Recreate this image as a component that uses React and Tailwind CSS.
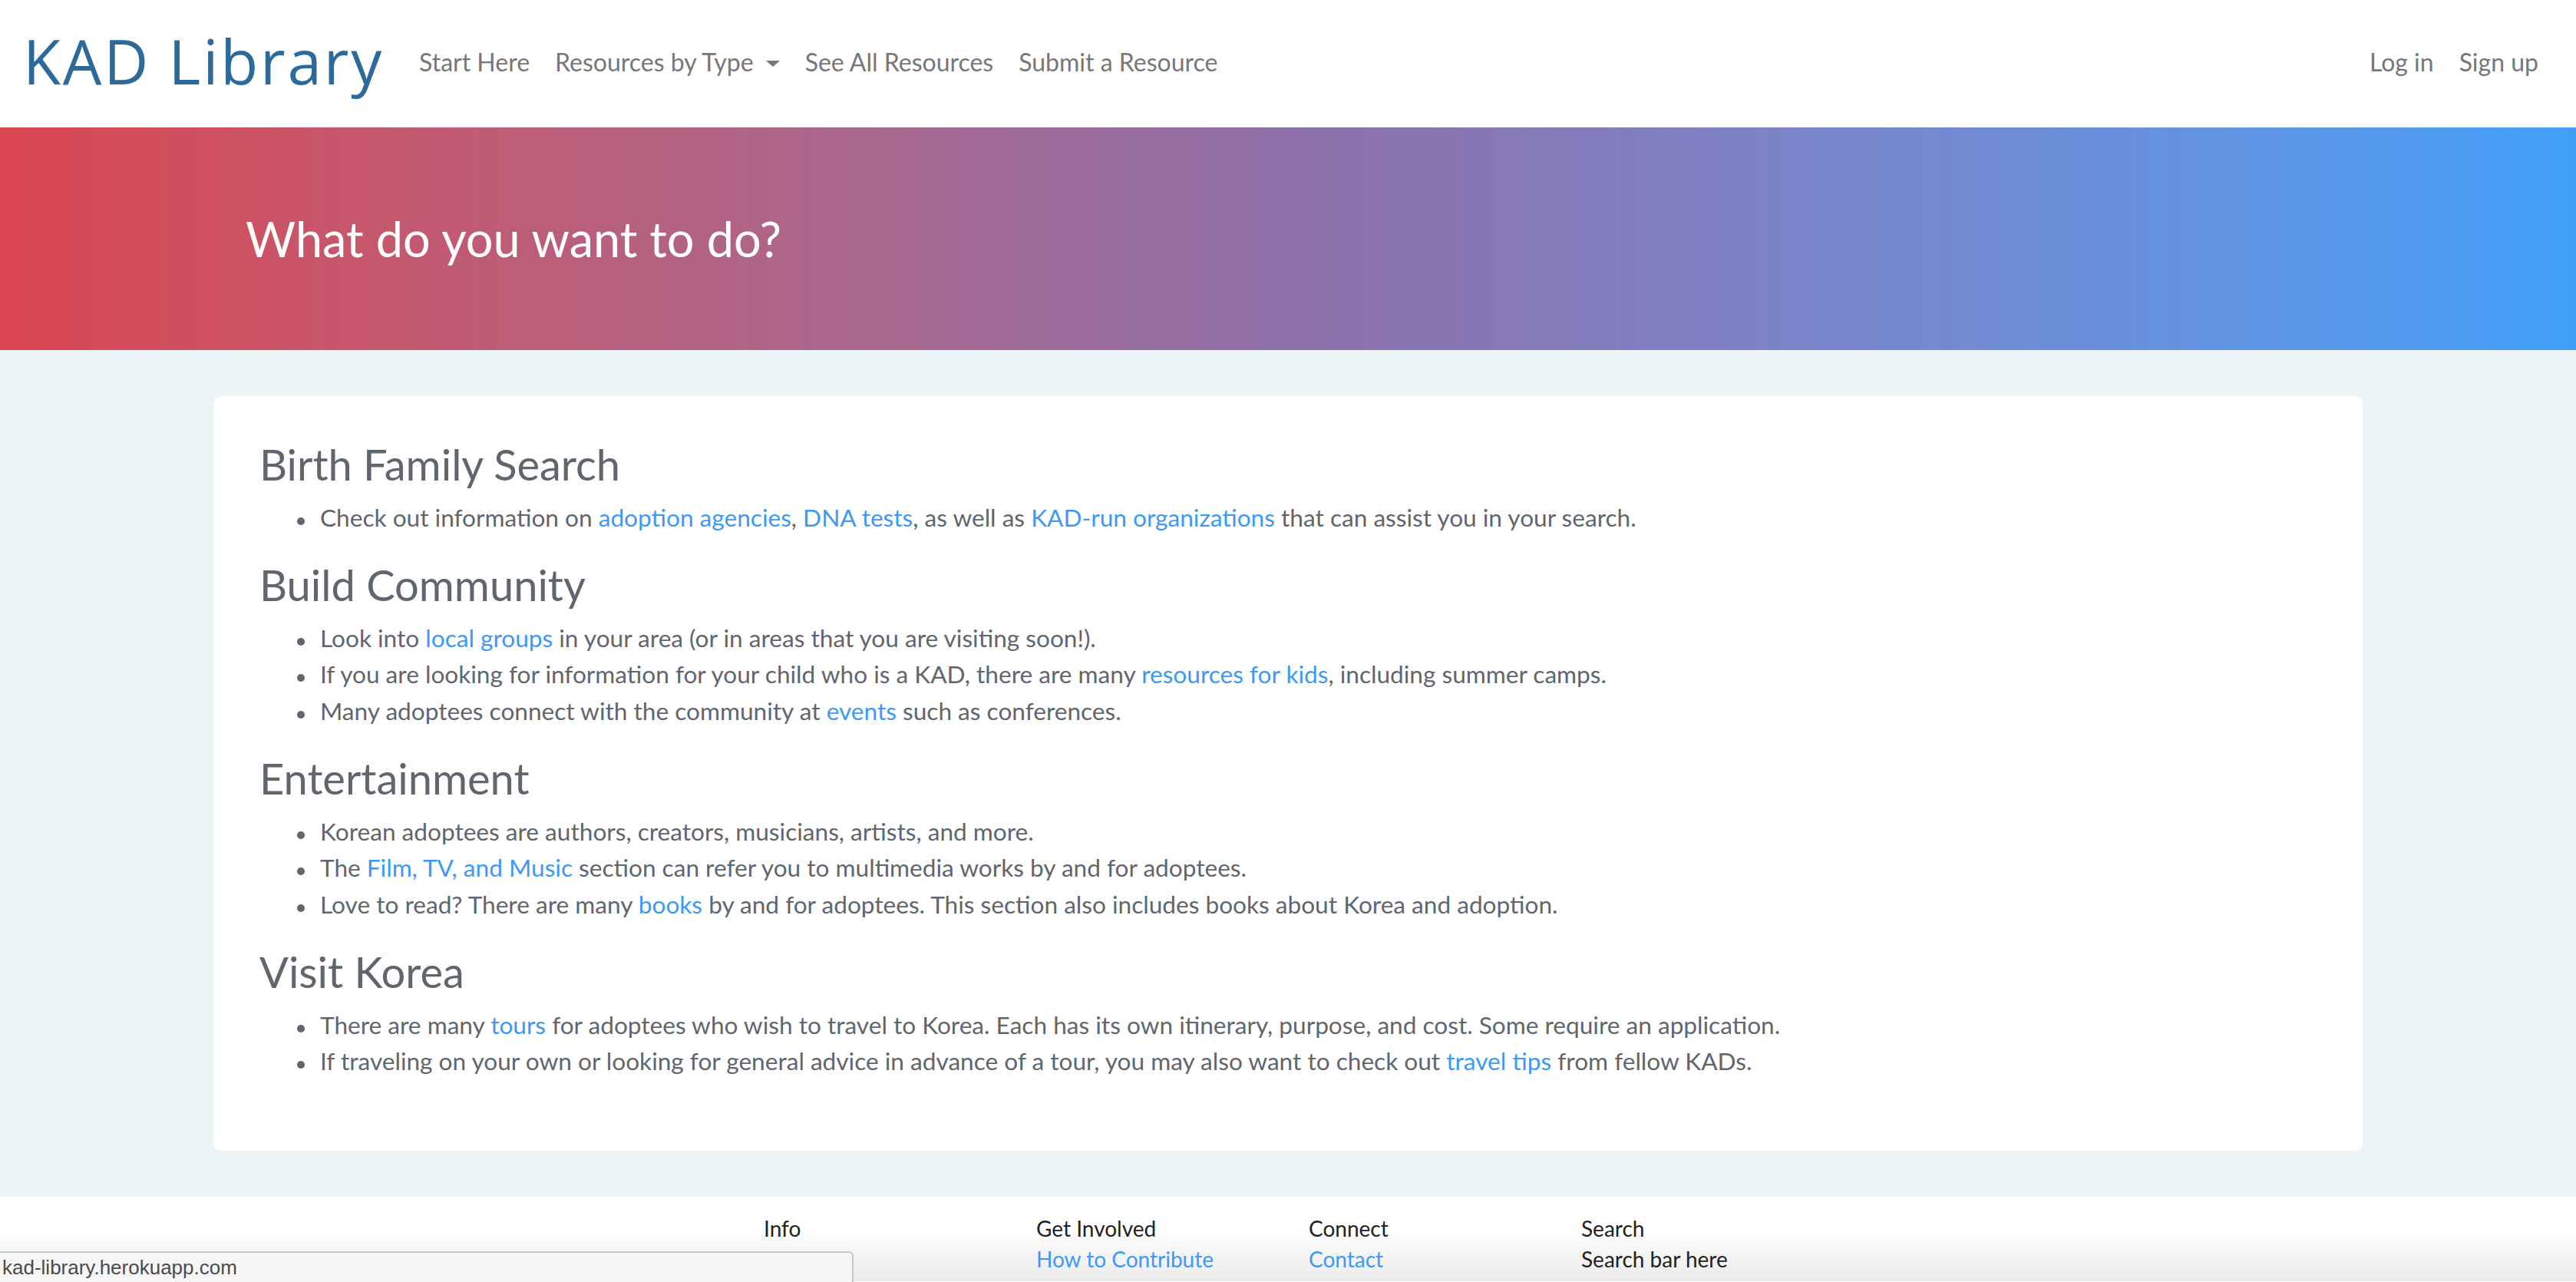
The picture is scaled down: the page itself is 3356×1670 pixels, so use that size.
const navLinks = ["Start Here", "Resources by Type", "See All Resources", "Submit a Resource"];

const Link = ({ children }) => (
	<a href="#" className="text-[#3d99f5]">{children}</a>
);

const sections = [
	{
		title: "Birth Family Search",
		items: [
			<>Check out information on <Link>adoption agencies</Link>, <Link>DNA tests</Link>, as well as <Link>KAD-run organizations</Link> that can assist you in your search.</>
		]
	},
	{
		title: "Build Community",
		items: [
			<>Look into <Link>local groups</Link> in your area (or in areas that you are visiting soon!).</>,
			<>If you are looking for information for your child who is a KAD, there are many <Link>resources for kids</Link>, including summer camps.</>,
			<>Many adoptees connect with the community at <Link>events</Link> such as conferences.</>
		]
	},
	{
		title: "Entertainment",
		items: [
			<>Korean adoptees are authors, creators, musicians, artists, and more.</>,
			<>The <Link>Film, TV, and Music</Link> section can refer you to multimedia works by and for adoptees.</>,
			<>Love to read? There are many <Link>books</Link> by and for adoptees. This section also includes books about Korea and adoption.</>
		]
	},
	{
		title: "Visit Korea",
		items: [
			<>There are many <Link>tours</Link> for adoptees who wish to travel to Korea. Each has its own itinerary, purpose, and cost. Some require an application.</>,
			<>If traveling on your own or looking for general advice in advance of a tour, you may also want to check out <Link>travel tips</Link> from fellow KADs.</>
		]
	}
];

const footerCols = [
	{ title: "Info", item: null },
	{ title: "Get Involved", item: <Link>How to Contribute</Link> },
	{ title: "Connect", item: <Link>Contact</Link> },
	{ title: "Search", item: "Search bar here" }
];

const App = () => {
	return (
		<div className="relative min-h-[1670px] bg-white font-['Lato',sans-serif]">
			{/* navbar */}
			<nav className="flex h-[166px] items-center justify-between pl-[30px] pr-[49px]">
				<div className="flex items-center">
					<a href="#" className="mb-[8px] font-['Open_Sans',sans-serif] text-[80px] leading-none tracking-[2.8px] text-[#2c6a9c]">
						KAD Library
					</a>
					<ul className="mb-[4px] ml-[46px] flex gap-[33px] text-[32px] leading-none text-[#777]">
						{navLinks.map((label) => (
							<li key={label} className="flex items-center">
								<a href="#">{label}</a>
								{label === "Resources by Type" && (
									<span className="ml-[16px] mt-[4px] h-0 w-0 border-x-[9px] border-t-[8px] border-x-transparent border-t-[#777]" />
								)}
							</li>
						))}
					</ul>
				</div>
				<ul className="mb-[4px] flex gap-[33px] text-[32px] leading-none text-[#777]">
					<li><a href="#">Log in</a></li>
					<li><a href="#">Sign up</a></li>
				</ul>
			</nav>

			{/* hero */}
			<header className="flex h-[290px] items-center bg-gradient-to-r from-[#da4550] via-[#8e70a9] to-[#3fa0f9] pl-[320px]">
				<h1 className="text-[63px] leading-[1.1] text-white">What do you want to do?</h1>
			</header>

			{/* main */}
			<main className="bg-[#edf4f7] py-[60px]">
				<div className="mx-auto w-[2800px] rounded-[10px] bg-white px-[60px] pb-[92px] pt-[58px] text-[#5f666d]">
					{sections.map((section, index) => (
						<section key={section.title} className={index ? "mt-[33px]" : ""}>
							<h2 className="text-[56px] leading-[1.1]">{section.title}</h2>
							<ul className="mt-[15px] pl-[43px] text-[31.6px] leading-[47.5px]">
								{section.items.map((item, i) => (
									<li key={i} className="flex items-start">
										<span className="w-[36px] shrink-0 pt-[23px]">
											<span className="ml-[6px] block h-[10px] w-[10px] rounded-full bg-[#5f666d]" />
										</span>
										<span>{item}</span>
									</li>
								))}
							</ul>
						</section>
					))}
				</div>
			</main>

			{/* footer */}
			<footer className="h-[110px] bg-gradient-to-b from-white from-[35%] to-[#ebebeb] pt-[21px]">
				<div className="ml-[995px] grid w-[1420px] grid-cols-4 text-[28px] leading-[40px] text-[#222]">
					{footerCols.map((col) => (
						<div key={col.title}>
							<h4>{col.title}</h4>
							{col.item && <div>{col.item}</div>}
						</div>
					))}
				</div>
			</footer>

			{/* browser status bubble */}
			<div className="absolute bottom-0 left-0 flex h-[40px] w-[1112px] items-center rounded-tr-[6px] border-r-2 border-t-2 border-[#c6c6c6] bg-[#f6f6f6] pl-[3px] font-['Liberation_Sans',sans-serif] text-[26px] text-[#4a4a4a]">
				kad-library.herokuapp.com
			</div>
		</div>
	);
};

export default App;
